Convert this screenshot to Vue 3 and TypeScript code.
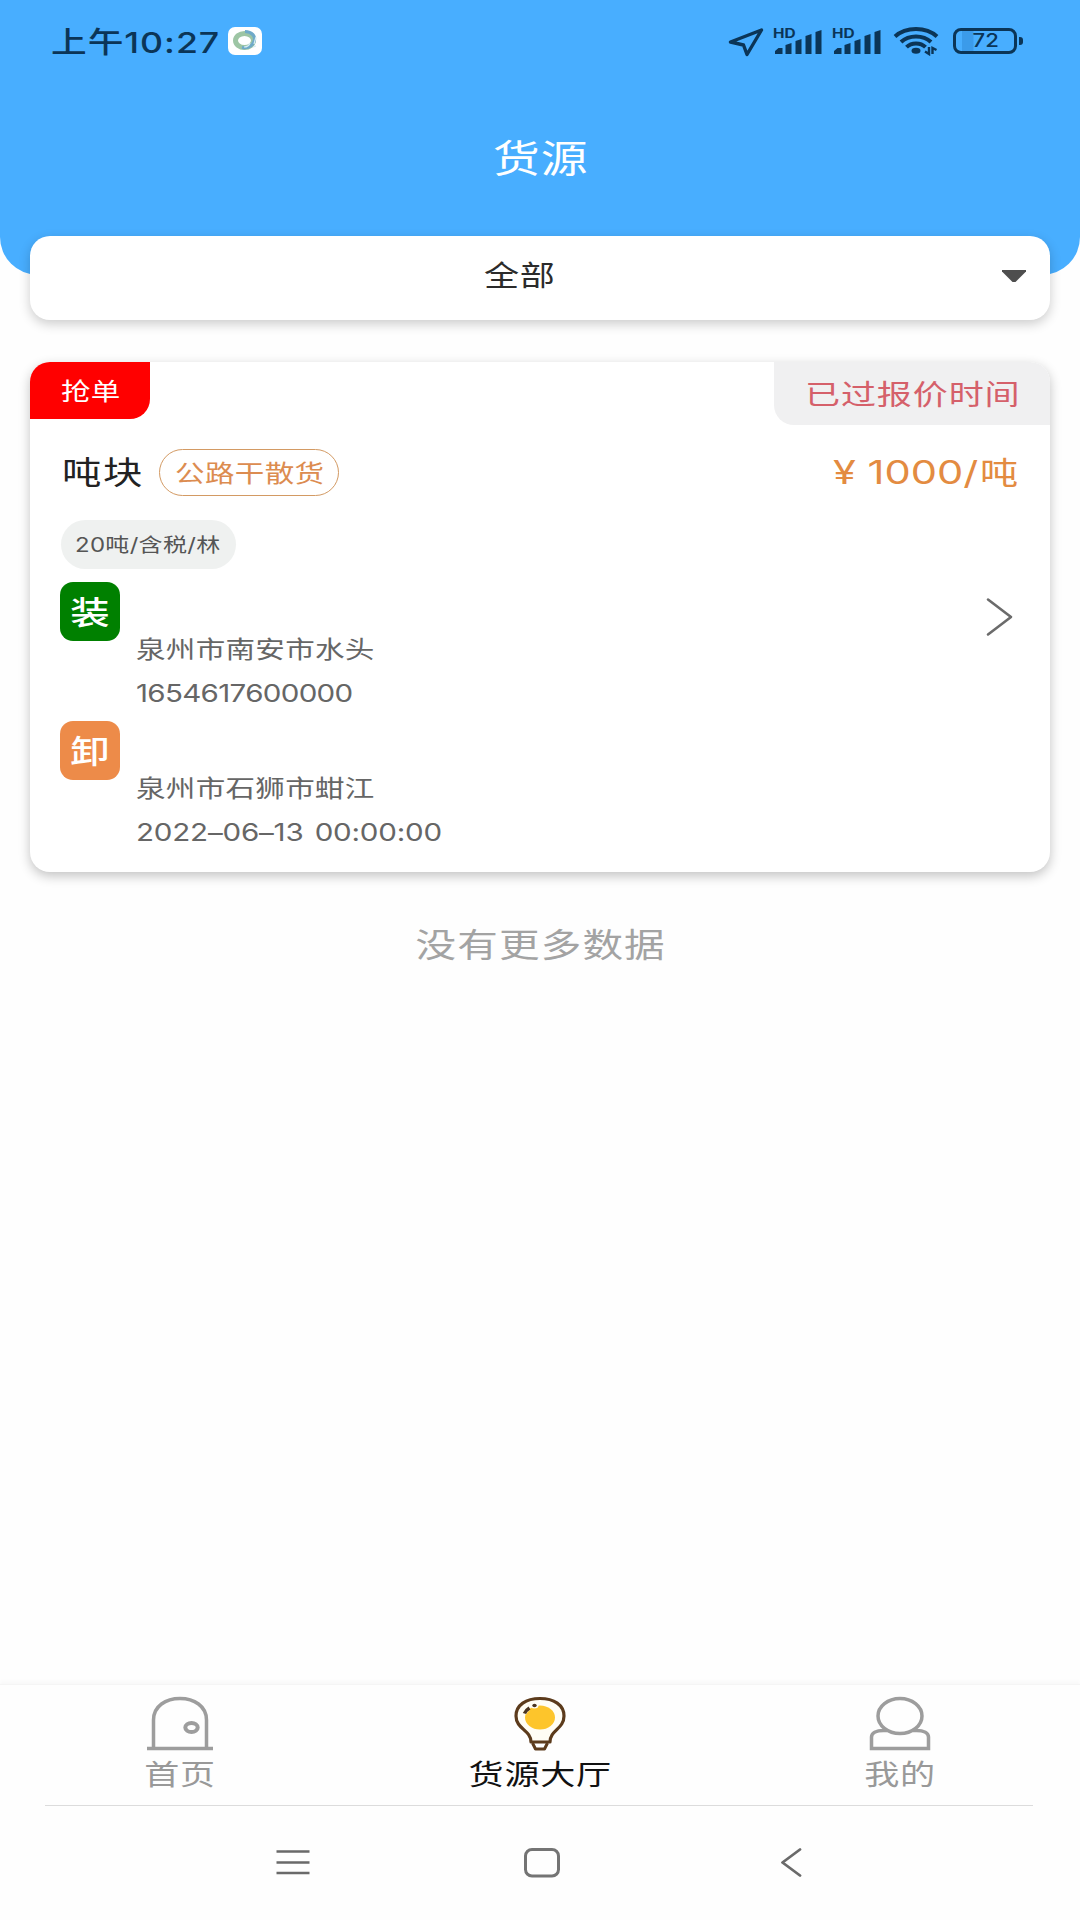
<script setup lang="ts">
interface Stop {
  mark: string
  kind: 'load' | 'unload'
  place: string
  time: string
}

interface Tab {
  icon: 'home' | 'bulb' | 'user'
  label: string
  active: boolean
}

const stops: Stop[] = [
  { mark: '装', kind: 'load', place: '泉州市南安市水头', time: '1654617600000' },
  { mark: '卸', kind: 'unload', place: '泉州市石狮市蚶江', time: '2022–06–13 00:00:00' },
]

const tabs: Tab[] = [
  { icon: 'home', label: '首页', active: false },
  { icon: 'bulb', label: '货源大厅', active: true },
  { icon: 'user', label: '我的', active: false },
]
</script>

<template>
  <div class="screen">
    <header class="header">
      <div class="status">
        <span class="wide clock">上午10:27</span>
        <svg class="app-icon" width="34" height="28" viewBox="0 0 34 28">
          <rect width="34" height="28" rx="7" fill="#fff" />
          <ellipse cx="16.500" cy="13.500" rx="9" ry="7" fill="none" stroke="#9dc5a4" stroke-width="5" />
          <path d="M17 4.500c7 0 11 5 9 10s-6 7-12 6" fill="none" stroke="#6faac8" stroke-width="3.200" />
          <path d="M22 16c-1 3-4 4-6 4M28 10l-2 7M25 20l3-1" fill="none" stroke="#d6edf4" stroke-width="1.200" />
        </svg>
        <div class="indicators">
          <svg class="locate" width="36" height="29" viewBox="0 0 36 29">
            <path d="M2.500 14 33.500 2 19 26.500 15.500 17Z" fill="none" stroke="#0b3557" stroke-width="3.400" stroke-linejoin="round" />
          </svg>
          <div v-for="n in 2" :key="n" class="signal">
            <span class="wide hd">HD</span>
            <svg width="50" height="28" viewBox="0 0 50 28">
              <path d="M1 26v-3l3.500-3h4V26ZM11.500 17l6-2v11h-6ZM21.500 13l6-2v15h-6ZM31.500 8l6-2v20h-6ZM41.500 4l6-2v24h-6Z" fill="#0b3557" />
            </svg>
          </div>
          <svg class="wifi" width="46" height="30" viewBox="0 0 46 30">
            <g fill="none" stroke="#0b3557" stroke-width="4">
              <path d="M2 10.500C13 .5 33 .5 44 10.500" />
              <path d="M8 16c8-7.500 22-7.500 30 0" />
              <path d="M13.500 21.200c5-5 14-5 19 0" />
            </g>
            <ellipse cx="23" cy="24.800" rx="4.500" ry="3" fill="#0b3557" />
            <path d="M36 21v7l-4-2.500M39.500 28v-6l4 2" fill="none" stroke="#0b3557" stroke-width="2.400" />
          </svg>
          <div class="battery">
            <span class="wide">72</span>
          </div>
        </div>
      </div>
      <h1 class="title"><span class="wide">货源</span></h1>
    </header>

    <main class="content">
      <div class="filter">
        <span class="wide filter-label">全部</span>
        <svg class="caret" width="24" height="13" viewBox="0 0 24 13">
          <path d="M0 0h24v1.500L13.500 12h-3L0 1.500Z" fill="#4e4e4e" />
        </svg>
      </div>

      <article class="card">
        <div class="tags">
          <div class="tag grab"><span class="wide">抢单</span></div>
          <div class="tag expired"><span class="wide">已过报价时间</span></div>
        </div>
        <div class="goods">
          <span class="wide name">吨块</span>
          <div class="type"><span class="wide">公路干散货</span></div>
          <div class="price">
            <span class="wide amount">¥ 1000/</span>
            <span class="wide unit">吨</span>
          </div>
        </div>
        <div class="detail"><span class="wide">20吨/含税/林</span></div>
        <div class="route">
          <div class="stops">
            <div v-for="stop in stops" :key="stop.kind" class="stop">
              <div class="mark" :class="stop.kind"><span class="wide">{{ stop.mark }}</span></div>
              <div class="stop-text">
                <span class="wide place">{{ stop.place }}</span>
                <span class="wide time" :class="stop.kind">{{ stop.time }}</span>
              </div>
            </div>
          </div>
          <svg class="arrow" width="28" height="40" viewBox="0 0 28 40">
            <path d="m2 2.500 23 17.500L2 37.500" fill="none" stroke="#6b6b6b" stroke-width="2.600" stroke-linecap="round" stroke-linejoin="round" />
          </svg>
        </div>
      </article>

      <p class="no-more"><span class="wide">没有更多数据</span></p>
    </main>

    <nav class="tabbar">
      <div v-for="tab in tabs" :key="tab.label" class="tab" :class="{ active: tab.active }">
        <svg v-if="tab.icon === 'home'" width="68" height="56" viewBox="0 0 68 56">
          <g fill="none" stroke="#9d9d9d" stroke-width="3.500">
            <path d="M7.500 52V24C7.500 10 20 2.500 34 2.500S60.500 10 60.500 24v28" />
            <path d="M1 52.500h66" />
            <ellipse cx="45.500" cy="31.500" rx="6.200" ry="4.600" stroke-width="4" />
          </g>
        </svg>
        <svg v-else-if="tab.icon === 'bulb'" width="68" height="56" viewBox="0 0 68 56">
          <path d="M25 46c0-12-15-13-15-26C10 9 20 2.500 34 2.500S58 9 58 20c0 13-14 14-14 26Z" fill="#fffdf4" stroke="#5c3b1c" stroke-width="3.200" stroke-linejoin="round" />
          <path d="M26.500 47 29.500 53h9l3-6" fill="none" stroke="#5c3b1c" stroke-width="3" stroke-linejoin="round" />
          <ellipse cx="34" cy="21.500" rx="15" ry="12" fill="#fdc52b" />
          <path d="M17.500 17.500c.8-2.800 2.500-4.500 5-6" fill="none" stroke="#fffdf4" stroke-width="6" />
          <path d="M18.500 17.500c.8-2.200 2.500-4 5-5.500" fill="none" stroke="#4a3420" stroke-width="3.600" />
          <ellipse cx="28.500" cy="9.500" rx="4" ry="3" fill="#fffdf4" />
          <ellipse cx="28.500" cy="9.500" rx="2.200" ry="1.700" fill="#4a3420" />
        </svg>
        <svg v-else width="68" height="56" viewBox="0 0 68 56">
          <g fill="none" stroke="#9d9d9d" stroke-width="3.500">
            <ellipse cx="34" cy="20" rx="22" ry="17.500" />
            <path d="M21 34.500H17.500C10 34.500 5.500 37 5.500 41v11.500h57V41c0-4-4.500-6.500-12-6.500H47" />
          </g>
        </svg>
        <span class="wide">{{ tab.label }}</span>
      </div>
    </nav>

    <footer class="sysnav">
      <svg class="menu" width="34" height="30" viewBox="0 0 34 30">
        <path d="M.5 4.500h33M.5 15.500h33M.5 26h33" stroke="#6a6a6a" stroke-width="2.600" />
      </svg>
      <svg class="home" width="38" height="32" viewBox="0 0 38 32">
        <rect x="2.500" y="2.500" width="33" height="26.500" rx="6.500" fill="none" stroke="#747474" stroke-width="3" />
      </svg>
      <svg class="back" width="22" height="32" viewBox="0 0 22 32">
        <path d="M19 2.500 1.500 15.500 19 28.500" fill="none" stroke="#6a6a6a" stroke-width="2.800" stroke-linecap="round" stroke-linejoin="round" />
      </svg>
    </footer>
  </div>
</template>

<style>
body {
  background: #fefefe;
}
</style>

<style scoped>
.screen {
  display: flex;
  flex-direction: column;
  width: 1080px;
  height: 1920px;
  overflow: hidden;
  background: #fefefe;
  font-family: Inter, "Noto Sans CJK SC", sans-serif;
  color: #666;
}

.screen * {
  box-sizing: border-box;
}

svg {
  display: block;
  flex: none;
}

/* Extended-width lettering */
.wide {
  display: block;
  flex: none;
  white-space: nowrap;
  line-height: 1;
  transform: scaleX(1.23);
  transform-origin: 0 50%;
}

.header {
  flex: none;
  height: 275px;
  background: #48aeff;
  border-radius: 0 0 38px 38px;
}

.status {
  display: flex;
  height: 84px;
  padding-left: 51px;
}

.clock {
  width: 177px;
  margin-top: 28px;
  font-size: 29px;
  font-weight: 500;
  letter-spacing: 0.800px;
  color: #0b3557;
}

.app-icon {
  margin-top: 27px;
}

.indicators {
  display: flex;
  margin-left: 466px;
}

.locate {
  margin: 28px 10px 0 0;
}

.signal {
  width: 58.500px;
  height: 56px;
  position: relative;
  padding-top: 28px;
}

.hd {
  position: absolute;
  left: -1px;
  top: 28px;
  font-size: 12.500px;
  font-weight: 700;
  color: #0b3557;
}

.wifi {
  margin: 26px 0 0 2px;
}

.battery {
  position: relative;
  display: flex;
  align-items: center;
  justify-content: center;
  width: 64px;
  height: 26px;
  margin: 28px 0 0 14px;
  border: 3px solid #0b3557;
  border-radius: 8px;
  background: linear-gradient(90deg, transparent 6px, #3b9bea 6px 17px, transparent 18px);
}

.battery::after {
  content: "";
  position: absolute;
  right: -9px;
  top: 6px;
  width: 4px;
  height: 8px;
  border-radius: 0 3px 3px 0;
  background: #0b3557;
}

.battery .wide {
  margin: 0 0 0 1px;
  font-size: 18px;
  font-weight: 500;
  color: #0b3557;
  transform-origin: 50% 50%;
}

.title {
  display: flex;
  justify-content: center;
  margin: 0;
  padding: 55px 0 0 1px;
  font-weight: 400;
}

.title .wide {
  font-size: 38px;
  letter-spacing: 0.800px;
  color: #fff;
  transform-origin: 50% 50%;
}

.content {
  flex: 1;
  padding: 0 30px;
  margin-top: -39px;
}

.filter {
  display: flex;
  align-items: flex-start;
  height: 84px;
  padding: 26px 24px 0 454px;
  background: #fff;
  border-radius: 20px;
  box-shadow: 0 4px 12px rgba(0, 0, 0, 0.2);
}

.filter-label {
  font-size: 28.500px;
  letter-spacing: 0.500px;
  color: #2b2b2b;
}

.caret {
  margin: 8px 0 0 auto;
}

.card {
  height: 510px;
  margin-top: 42px;
  background: #fff;
  border-radius: 20px;
  box-shadow: 0 4px 12px rgba(0, 0, 0, 0.24);
}

.tags {
  display: flex;
  justify-content: space-between;
  align-items: flex-start;
}

.tag {
  display: flex;
}

.grab {
  width: 120px;
  height: 57px;
  padding: 18px 0 0 31px;
  border-radius: 20px 0 20px 0;
  background: #f00;
  color: #fff;
  font-size: 24px;
}

.grab .wide {
  letter-spacing: 0.200px;
}

.expired {
  width: 276px;
  height: 63px;
  padding: 19px 0 0 31px;
  border-radius: 0 20px 0 20px;
  background: #f0f0f1;
  color: #d5606a;
  font-size: 28.500px;
}

.expired .wide {
  letter-spacing: 0.700px;
}

.goods {
  display: flex;
  height: 47px;
  margin-top: 24px;
  padding: 0 30px 0 32px;
}

.name {
  width: 97px;
  margin-top: 8px;
  font-size: 32px;
  letter-spacing: 1.300px;
  color: #222;
}

.type {
  width: 180px;
  height: 47px;
  padding: 12px 0 0 15px;
  border: 1.500px solid #d39a63;
  border-radius: 24px;
  color: #dc8c50;
  font-size: 24px;
}

.type .wide {
  letter-spacing: 0.300px;
}

.price {
  display: flex;
  width: 187px;
  margin: 8px 0 0 auto;
  font-size: 32px;
  color: #e38b41;
}

.amount {
  width: 147px;
  transform: scaleX(1.3);
}

.unit {
  font-size: 31px;
}

.detail {
  width: 175px;
  height: 49px;
  margin: 24px 0 0 31px;
  padding: 16px 0 0 14px;
  border-radius: 25px;
  background: #eff1f0;
  color: #555;
  font-size: 19.500px;
}

.detail .wide {
  letter-spacing: 0.250px;
}

.route {
  display: flex;
  justify-content: space-between;
  padding: 13px 36px 0 30px;
}

.stop {
  display: flex;
  height: 139px;
}

.mark {
  display: flex;
  justify-content: center;
  width: 60px;
  height: 59px;
  padding: 15px 0 0 1px;
  border-radius: 13px;
  color: #fff;
  font-size: 32px;
  font-weight: 500;
}

.mark .wide {
  transform-origin: 50% 50%;
}

.mark.load {
  background: #008000;
}

.mark.unload {
  background: #ed8b49;
}

.stop-text {
  padding: 56px 0 0 16px;
  font-size: 24px;
}

.place {
  letter-spacing: 0.250px;
}

.time {
  margin-top: 20px;
}

.time.load {
  letter-spacing: -0.550px;
}

.time.unload {
  letter-spacing: -0.150px;
  word-spacing: 2.500px;
}

.arrow {
  margin-top: 15px;
}

.no-more {
  display: flex;
  justify-content: center;
  margin: 57px 0 0;
  padding-left: 2px;
  font-size: 33px;
  color: #a3a3a3;
}

.no-more .wide {
  letter-spacing: 0.900px;
  transform-origin: 50% 50%;
}

.tabbar {
  display: flex;
  flex: none;
  height: 121px;
  border-top: 1px solid #f5f5f5;
  box-shadow: 0 -3px 3px #f9f9f9;
  background: #fefefe;
}

.tab {
  display: flex;
  flex: 1;
  flex-direction: column;
  align-items: center;
  padding-top: 11px;
  color: #999;
  font-size: 28.500px;
}

.tab .wide {
  margin: 9px 0 0 1px;
  letter-spacing: 0.600px;
  transform-origin: 50% 50%;
}

.tab.active {
  color: #111;
}

.sysnav {
  display: flex;
  flex: none;
  height: 115px;
  margin: 0 47px 0 45px;
  padding: 41px 0 0 231px;
  border-top: 1px solid #dcdcdc;
}

.home {
  margin: 0 0 0 213px;
}

.back {
  margin: 0 0 0 220px;
}
</style>
